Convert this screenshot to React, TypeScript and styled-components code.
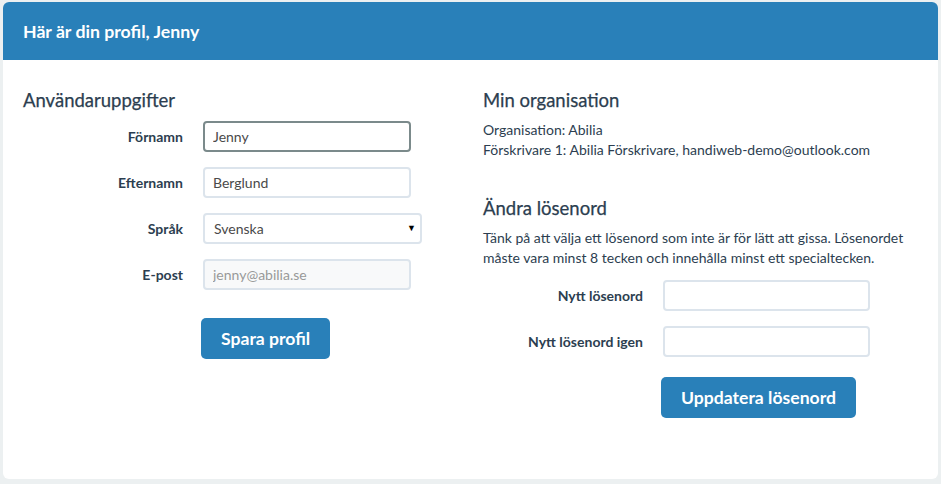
import styled, { createGlobalStyle } from "styled-components";

const GlobalStyle = createGlobalStyle`
  html, body {
    margin: 0;
    padding: 0;
    background: #ecf0f1;
    font-family: Lato, "Liberation Sans", sans-serif;
    color: #2c3e50;
  }
  * {
    box-sizing: border-box;
  }
`;

export default function App() {
  return (
    <>
      <GlobalStyle />
      <Page>
        <Card>
          <CardHeader>Här är din profil, Jenny</CardHeader>
          <CardBody>
            <Column>
              <SectionTitle>Användaruppgifter</SectionTitle>
              <Form>
                <FormRow>
                  <Label>Förnamn</Label>
                  <Input defaultValue="Jenny" $focused $width={208} />
                </FormRow>
                <FormRow>
                  <Label>Efternamn</Label>
                  <Input defaultValue="Berglund" $width={208} />
                </FormRow>
                <FormRow>
                  <Label>Språk</Label>
                  <SelectWrap>
                    <Select defaultValue="sv">
                      <option value="sv">Svenska</option>
                      <option value="en">English</option>
                    </Select>
                    <Caret>▼</Caret>
                  </SelectWrap>
                </FormRow>
                <FormRow>
                  <Label>E-post</Label>
                  <Input defaultValue="jenny@abilia.se" disabled $width={208} />
                </FormRow>
                <ButtonRow $top={28}>
                  <PrimaryButton>Spara profil</PrimaryButton>
                </ButtonRow>
              </Form>
            </Column>
            <Column>
              <SectionTitle>Min organisation</SectionTitle>
              <Text>
                Organisation: Abilia
                <br />
                Förskrivare 1: Abilia Förskrivare, handiweb-demo@outlook.com
              </Text>
              <SectionTitle $top={37}>Ändra lösenord</SectionTitle>
              <Text>
                Tänk på att välja ett lösenord som inte är för lätt att gissa. Lösenordet
                måste vara minst 8 tecken och innehålla minst ett specialtecken.
              </Text>
              <Form $top={12}>
                <FormRow>
                  <Label>Nytt lösenord</Label>
                  <Input type="password" $width={207} />
                </FormRow>
                <FormRow>
                  <Label>Nytt lösenord igen</Label>
                  <Input type="password" $width={207} />
                </FormRow>
                <ButtonRow $top={20}>
                  <PrimaryButton>Uppdatera lösenord</PrimaryButton>
                </ButtonRow>
              </Form>
            </Column>
          </CardBody>
        </Card>
      </Page>
    </>
  );
}

const Page = styled.div`
  padding: 2px 3px 5px 3px;
`;

const Card = styled.div`
  background: #ffffff;
  border-radius: 6px;
  min-height: 477px;
  overflow: hidden;
`;

const CardHeader = styled.div`
  background: #2980b9;
  color: #ffffff;
  height: 58px;
  padding: 0 20px;
  display: flex;
  align-items: center;
  font-size: 17.7px;
  font-weight: bold;
`;

const CardBody = styled.div`
  display: grid;
  grid-template-columns: 460px 1fr;
  padding: 29px 20px 20px 20px;
`;

const Column = styled.div`
  display: flex;
  flex-direction: column;
`;

const SectionTitle = styled.h3<{ $top?: number }>`
  margin: ${(p) => p.$top || 0}px 0 0 0;
  font-size: 18.5px;
  line-height: 22px;
  font-weight: normal;
  color: #2c3e50;
  -webkit-text-stroke: 0.25px #2c3e50;
`;

const Text = styled.p`
  margin: 9px 0 0 0;
  font-size: 14px;
  line-height: 20px;
`;

const Form = styled.div<{ $top?: number }>`
  display: flex;
  flex-direction: column;
  gap: 15px;
  margin-top: ${(p) => p.$top || 10}px;
`;

const FormRow = styled.div`
  display: grid;
  grid-template-columns: 160px auto;
  column-gap: 20px;
  align-items: center;
  justify-content: start;
`;

const Label = styled.label`
  text-align: right;
  font-size: 14px;
  font-weight: bold;
`;

const Input = styled.input<{ $focused?: boolean; $width: number }>`
  width: ${(p) => p.$width}px;
  height: 31px;
  padding: 0 8px;
  font-family: inherit;
  font-size: 14px;
  color: #4a4a4a;
  border: 2px solid ${(p) => (p.$focused ? "#7b8a8b" : "#dce4ec")};
  border-radius: 4px;
  background: #ffffff;
  outline: none;

  &:disabled {
    background: #f8f9fa;
    color: #999999;
  }
`;

const SelectWrap = styled.div`
  position: relative;
  width: 219px;
`;

const Select = styled.select`
  width: 100%;
  height: 31px;
  padding: 0 24px 0 9px;
  font-family: inherit;
  font-size: 14px;
  color: #4a4a4a;
  border: 2px solid #dce4ec;
  border-radius: 4px;
  background: #ffffff;
  appearance: none;
  outline: none;
`;

const Caret = styled.span`
  position: absolute;
  right: 6px;
  top: 9px;
  font-size: 9px;
  color: #000000;
  pointer-events: none;
`;

const ButtonRow = styled.div<{ $top: number }>`
  padding-left: 178px;
  margin-top: ${(p) => p.$top - 15}px;
`;

const PrimaryButton = styled.button`
  height: 41px;
  padding: 0 20px;
  border: none;
  border-radius: 5px;
  background: #2980b9;
  color: #ffffff;
  font-family: inherit;
  font-size: 17.6px;
  font-weight: bold;
  cursor: pointer;
`;
